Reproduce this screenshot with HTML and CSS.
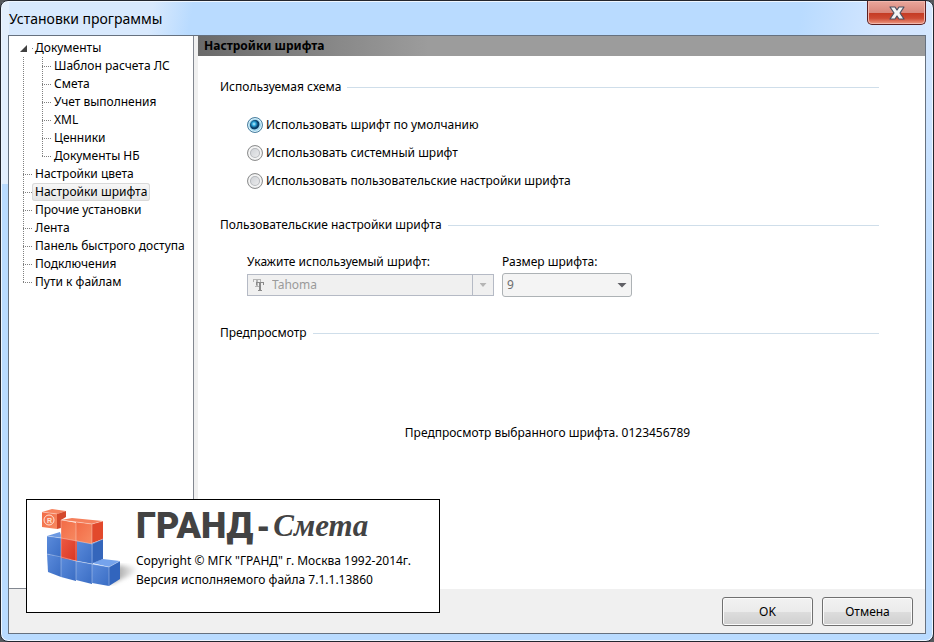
FILE: index.html
```html
<!DOCTYPE html>
<html lang="ru">
<head>
    <meta charset="UTF-8">
    <meta name="viewport" content="width=device-width, initial-scale=1.0">
    <title>Установки программы</title>
    <link rel="stylesheet" href="styles.css">
</head>
<body>
    <div class="window">
        <header class="titlebar">
            <h1>Установки программы</h1>
            <button type="button" class="close" aria-label="Закрыть">
                <svg width="18" height="14" viewBox="0 0 18 14">
                    <path d="M2 1h5l2 3 2-3h5l-4 6 4 6h-5l-2-3-2 3H2l4-6z" fill="#f4f4f4" stroke="#4b5060" stroke-width="1.2" stroke-linejoin="round"/>
                </svg>
            </button>
        </header>

        <div class="client">
            <div class="body">
                <nav class="tree">
                    <ul>
                        <li class="open"><a href="#docs">Документы</a>
                            <ul>
                                <li><a href="#template">Шаблон расчета ЛС</a></li>
                                <li><a href="#smeta">Смета</a></li>
                                <li><a href="#progress">Учет выполнения</a></li>
                                <li><a href="#xml">XML</a></li>
                                <li><a href="#prices">Ценники</a></li>
                                <li><a href="#docs-nb">Документы НБ</a></li>
                            </ul>
                        </li>
                        <li><a href="#colors">Настройки цвета</a></li>
                        <li><a href="#fonts" class="selected">Настройки шрифта</a></li>
                        <li><a href="#other">Прочие установки</a></li>
                        <li><a href="#ribbon">Лента</a></li>
                        <li><a href="#quick">Панель быстрого доступа</a></li>
                        <li><a href="#connections">Подключения</a></li>
                        <li><a href="#paths">Пути к файлам</a></li>
                    </ul>
                </nav>

                <main class="page">
                    <h2>Настройки шрифта</h2>
                    <div class="content">
                        <section class="group scheme">
                            <h3>Используемая схема</h3>
                            <div class="radios">
                                <label><input type="radio" name="scheme" checked>Использовать шрифт по умолчанию</label>
                                <label><input type="radio" name="scheme">Использовать системный шрифт</label>
                                <label><input type="radio" name="scheme">Использовать пользовательские настройки шрифта</label>
                            </div>
                        </section>

                        <section class="group custom">
                            <h3>Пользовательские настройки шрифта</h3>
                            <div class="fields">
                                <div class="field">
                                    <label for="font">Укажите используемый шрифт:</label>
                                    <div class="combo">
                                        <svg width="12" height="12" viewBox="0 0 12 12">
                                            <path d="M0 0h8v3H7V1H5V7h1v1H2V7h1V1H1V3H0z" fill="#b4b4b4"/>
                                            <path d="M3 3h8v3h-1V4H8V11h1v1H5v-1h1V4H4V6H3z" fill="#8a8a8a"/>
                                        </svg>
                                        <select id="font" disabled><option>Tahoma</option></select>
                                        <span class="drop"></span>
                                    </div>
                                </div>
                                <div class="field">
                                    <label for="size">Размер шрифта:</label>
                                    <div class="size-box">
                                        <select id="size" disabled><option>9</option></select>
                                    </div>
                                </div>
                            </div>
                        </section>

                        <section class="group">
                            <h3>Предпросмотр</h3>
                            <p class="preview">Предпросмотр выбранного шрифта. 0123456789</p>
                        </section>
                    </div>
                </main>
            </div>

            <footer class="buttons">
                <button type="button">OK</button>
                <button type="button">Отмена</button>
            </footer>
        </div>

        <aside class="about">
            <svg class="logo" width="100" height="92" viewBox="0 0 100 92">
                <defs>
                    <linearGradient id="blue" x1="0" y1="0" x2="1" y2="1">
                        <stop offset="0" stop-color="#5b8bdb"/>
                        <stop offset="1" stop-color="#3a6dc4"/>
                    </linearGradient>
                    <linearGradient id="orange" x1="0" y1="0" x2="1" y2="1">
                        <stop offset="0" stop-color="#f26a45"/>
                        <stop offset="1" stop-color="#f78a62"/>
                    </linearGradient>
                    <linearGradient id="red" x1="0" y1="0" x2="1" y2="1">
                        <stop offset="0" stop-color="#ee5a42"/>
                        <stop offset="1" stop-color="#d83624"/>
                    </linearGradient>
                    <linearGradient id="shadow" x1="0" y1="0" x2="1" y2="0">
                        <stop offset="0" stop-color="#8a8a8a"/>
                        <stop offset="1" stop-color="#fff"/>
                    </linearGradient>
                    <filter id="soft">
                        <feGaussianBlur stdDeviation="2"/>
                    </filter>
                </defs>
                <path d="M70 84L98 72 95 67 78 65z" fill="url(#shadow)" filter="url(#soft)"/>
                <path d="M7 54L21 57V77L8 72z" fill="url(#blue)"/>
                <path d="M21 57L36 61V81L21 77z" fill="url(#blue)"/>
                <path d="M36 61L52 64V84L36 80z" fill="url(#blue)"/>
                <path d="M52 64L69 67V86L52 83z" fill="url(#blue)"/>
                <path d="M52 63L63 59 80 61 69 67z" fill="#75a3ec"/>
                <path d="M69 67L80 61V79L69 86z" fill="#3265bd"/>
                <path d="M7 36L21 38V58L7 54z" fill="url(#blue)"/>
                <path d="M7 36L20 32 22 38z" fill="#6c99e2"/>
                <path d="M37 40L53 43V64L37 61z" fill="url(#blue)"/>
                <path d="M53 43L63 39V59L53 63z" fill="#3566bb"/>
                <path d="M21 37L37 40V61L21 58z" fill="url(#red)"/>
                <path d="M21 20L37 23V41L21 38z" fill="url(#orange)"/>
                <path d="M36 22L52 24V44L36 41z" fill="url(#orange)"/>
                <path d="M52 24L63 21V39L52 43z" fill="#e2492c"/>
                <path d="M21 20L32 18 63 21 52 24 37 22z" fill="#f5805c"/>
                <path d="M2 12L17 14V29L2 27z" fill="url(#orange)"/>
                <path d="M2 12L12 9 26 11 17 14z" fill="#f7835e"/>
                <path d="M17 14L26 11V17L21 20V28L17 29z" fill="#d4482b"/>
                <path d="M21 20V77M36 23V80M52 24V83M69 67V86M7 54L21 57 36 61 52 64 69 67 80 61M7 36L21 38 37 41 52 44 63 39M21 20L52 24 63 21M2 12L17 14" fill="none" stroke="#fff" stroke-opacity=".4" stroke-width=".8"/>
                <circle cx="9" cy="20" r="5" fill="none" stroke="#ffe1d4"/>
                <text class="mark" x="7" y="23">R</text>
            </svg>
            <div class="about-text">
                <p class="brand"><b>ГРАНД</b><span>-</span><i>Смета</i></p>
                <p>Copyright © МГК "ГРАНД" г. Москва 1992-2014г.</p>
                <p>Версия исполняемого файла 7.1.1.13860</p>
            </div>
        </aside>
    </div>
</body>
</html>
```
FILE: styles.css
```css
* {
    box-sizing: border-box;
}
body {
    margin: 0;
    background: #55585c;
    font: 12px/18px "Noto Sans", Tahoma, sans-serif;
    color: #000;
}
h1, h2, h3, p, ul {
    margin: 0;
    padding: 0;
    font-size: 12px;
    font-weight: normal;
}
ul {
    list-style: none;
}
button, select {
    font: inherit;
    color: inherit;
}
.window {
    position: relative;
    display: flex;
    flex-direction: column;
    min-height: 100vh;
    padding: 0 7px 7px;
    border: 1px solid #23262e;
    border-radius: 8px;
    box-shadow: inset 0 0 0 1px #eef6ff;
    background:
        linear-gradient(#e3effd, #e3effd) left top / 8px 183px no-repeat,
        linear-gradient(#d8e9ff, #b9dbff) right top / 8px 300px no-repeat,
        linear-gradient(100deg, #d8e9fd 0, #d8e9fd 150px, #b9dbff 190px, #b9dbff 790px, #d3e6ff 870px) left top / 100% 35px no-repeat,
        #b9dbff;
}

/* Title bar */
.titlebar {
    display: flex;
    justify-content: space-between;
    align-items: flex-start;
    height: 34px;
}
.titlebar h1 {
    padding-left: 1px;
    font: 14px/36px "Noto Sans", sans-serif;
}
.close {
    display: flex;
    justify-content: center;
    align-items: center;
    width: 59px;
    height: 24px;
    padding: 0;
    border: 1px solid #5b1f20;
    border-top: 0;
    border-radius: 0 0 5px 5px;
    box-shadow: inset 0 0 0 1px #f2b7ad;
    background: linear-gradient(#e9a79c, #d9877b 50%, #c43a22 51%, #cd4a33 75%, #ee9b83);
}

/* Client area */
.client {
    flex: 1;
    display: flex;
    flex-direction: column;
    border: 1px solid #66717f;
    background: #f0f0f0;
}
.body {
    flex: 1;
    display: flex;
    gap: 4px;
}
.tree {
    width: 185px;
    padding: 3px 0 0 14px;
    border-right: 1px solid #828790;
    border-bottom: 1px solid #828790;
    background: #fff;
}
.tree li {
    padding-left: 9px;
    background:
        repeating-linear-gradient(#808080 0 1px, transparent 1px 2px) 0 0 / 1px 100% no-repeat,
        repeating-linear-gradient(90deg, #808080 0 1px, transparent 1px 2px) 0 9px / 9px 1px no-repeat;
}
.tree li:last-child {
    background-size: 1px 9px, 9px 1px;
}
.tree li.open {
    background-position: 0 18px, 9px 9px;
    background-size: 1px 100%, 2px 1px;
}
.tree li.open::before {
    content: "";
    float: left;
    width: 7px;
    height: 7px;
    margin: 6px 0 0 -12px;
    background: #404040;
    clip-path: polygon(100% 0, 100% 100%, 0 100%);
}
.tree ul ul {
    padding-left: 10px;
}
.tree a {
    display: block;
    width: max-content;
    height: 18px;
    padding: 0 3px;
    color: #000;
    text-decoration: none;
    white-space: nowrap;
}
.tree .selected {
    border-radius: 3px;
    box-shadow: inset 0 0 0 1px #d9d9d9;
    background: linear-gradient(#f8f8f8, #e5e5e5);
}

/* Settings page */
.page {
    flex: 1;
    background: #fff;
}
.page h2 {
    padding-left: 6px;
    background: linear-gradient(90deg, #6a6a6a, #9c9c9c 230px);
    font-weight: bold;
    line-height: 20px;
}
.content {
    padding: 22px 46px 0 22px;
}
.group h3 {
    display: flex;
    align-items: center;
    gap: 6px;
}
.group h3::after {
    content: "";
    flex: 1;
    height: 1px;
    background: #cfdeea;
}
.scheme {
    height: 138px;
}
.custom {
    height: 108px;
}
.radios {
    padding: 15px 0 0 27px;
}
.radios label {
    display: flex;
    align-items: center;
    gap: 3px;
    height: 28px;
}
.radios input {
    appearance: none;
    width: 16px;
    height: 16px;
    margin: 0;
    border: 1px solid #8e8f8f;
    border-radius: 50%;
    box-shadow: inset 0 0 0 2px #f4f4f4, inset 0 0 0 3px #b5b8bc;
    background: linear-gradient(135deg, #c6cacf, #f4f4f4);
}
.radios input:checked {
    border-color: #4b7f9f;
    box-shadow: inset 0 0 0 1px #dff3fb, inset 0 0 0 2px #9dd3ec;
    background: radial-gradient(circle at 6px 6px, #c8f4ff 0, #2aa5dc 2px, #0b3c66 4px, #0b3c66 5px, #b5e2f5 6px);
}
.fields {
    display: flex;
    gap: 8px;
    padding: 19px 0 0 27px;
}
.combo {
    display: flex;
    align-items: center;
    width: 247px;
    height: 22px;
    margin-top: 3px;
    padding-left: 5px;
    border: 1px solid #b5bac5;
    background: #f0f0f0;
}
.field select {
    flex: 1;
    appearance: none;
    height: 20px;
    padding: 0 0 0 7px;
    border: 0;
    background: transparent;
    color: #9a9a9a;
    opacity: 1;
}
.drop {
    display: flex;
    justify-content: center;
    align-items: center;
    align-self: stretch;
    width: 21px;
    border-left: 1px solid #b5bac5;
}
.drop::after, .size-box::after {
    content: "";
    width: 7px;
    height: 4px;
    background: #b5b5b5;
    clip-path: polygon(0 0, 100% 0, 50% 100%);
}
.size-box {
    display: flex;
    align-items: center;
    width: 130px;
    height: 24px;
    margin-top: 2px;
    padding-right: 4px;
    border: 1px solid #adb2b5;
    border-radius: 3px;
    background: #f4f4f4;
}
.size-box::after {
    width: 10px;
    height: 5px;
    background: #606066;
}
.size-box select {
    padding-left: 4px;
    color: #6d6d6d;
}
.preview {
    padding: 82px 4px 0 0;
    text-align: center;
}

/* Bottom buttons */
.buttons {
    display: flex;
    justify-content: flex-end;
    gap: 9px;
    padding: 8px 12px 7px;
}
.buttons button {
    width: 91px;
    height: 29px;
    border: 1px solid #707070;
    border-radius: 3px;
    box-shadow: inset 0 0 0 1px #fbfbfb;
    background: linear-gradient(#f2f2f2, #ebebeb 50%, #dddddd 51%, #cfcfcf);
}

/* Product info, lies over the dialog */
.about {
    position: absolute;
    left: 25px;
    bottom: 28px;
    display: flex;
    width: 414px;
    height: 114px;
    border: 1px solid #000;
    background: #fff;
}
.logo {
    margin-left: 13px;
}
.mark {
    font: bold 7px "Liberation Sans", sans-serif;
    fill: #ffe1d4;
}
.about-text {
    margin-left: -4px;
    line-height: 19px;
    white-space: nowrap;
}
.about-text .brand {
    display: flex;
    align-items: center;
    gap: 4px;
    height: 51px;
    color: #434343;
}
.brand b {
    font: 900 36px/50px Roboto, sans-serif;
}
.brand span {
    font: bold 36px/50px "Liberation Sans", sans-serif;
}
.brand i {
    font: italic bold 31px/50px "Liberation Serif", serif;
}
```
